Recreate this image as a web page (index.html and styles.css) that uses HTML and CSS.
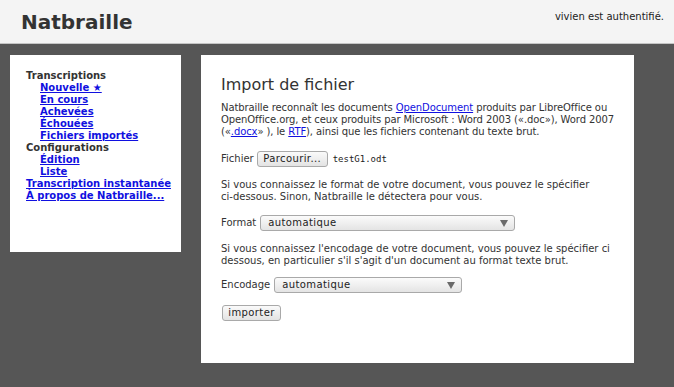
FILE: index.html
```html
<!DOCTYPE html>
<html lang="fr">
<head>
<meta charset="utf-8">
<title>Natbraille</title>
<link rel="stylesheet" href="styles.css">
</head>
<body>
<header class="topbar">
  <div class="brand">Natbraille</div>
  <div class="auth">vivien est authentifié.</div>
</header>
<div class="page">
  <nav class="sidebar">
    <div class="nav-head">Transcriptions</div>
    <ul class="nav-sub">
      <li><a href="#">Nouvelle ★</a></li>
      <li><a href="#">En cours</a></li>
      <li><a href="#">Achevées</a></li>
      <li><a href="#">Échouées</a></li>
      <li><a href="#">Fichiers importés</a></li>
    </ul>
    <div class="nav-head">Configurations</div>
    <ul class="nav-sub">
      <li><a href="#">Édition</a></li>
      <li><a href="#">Liste</a></li>
    </ul>
    <a class="nav-top" href="#">Transcription instantanée</a>
    <a class="nav-top" href="#">À propos de Natbraille...</a>
  </nav>
  <main class="content">
    <h1 class="title">Import de fichier</h1>
    <p class="text text-tight">Natbraille reconnaît les documents <a href="#">OpenDocument</a> produits par LibreOffice ou OpenOffice.org, et ceux produits par Microsoft : Word 2003 («.doc»), Word 2007 («<a href="#">.docx</a>» ), le <a href="#">RTF</a>), ainsi que les fichiers contenant du texte brut.</p>
    <div class="row row-file">
      <span class="label">Fichier</span>
      <span class="btn btn-browse">Parcourir...</span>
      <span class="filename">testG1.odt</span>
    </div>
    <p class="text">Si vous connaissez le format de votre document, vous pouvez le spécifier ci&#8209;dessous. Sinon, Natbraille le détectera pour vous.</p>
    <div class="row">
      <span class="label">Format</span>
      <span class="select select-format"><span class="select-value">automatique</span></span>
    </div>
    <p class="text text-before-enc">Si vous connaissez l'encodage de votre document, vous pouvez le spécifier ci dessous, en particulier s'il s'agit d'un document au format texte brut.</p>
    <div class="row">
      <span class="label">Encodage</span>
      <span class="select select-enc"><span class="select-value">automatique</span></span>
    </div>
    <div class="row row-last">
      <span class="btn btn-import">importer</span>
    </div>
  </main>
</div>
</body>
</html>
```

FILE: styles.css
```css
html, body {
  margin: 0;
  padding: 0;
}
body {
  background: #565656;
  font-family: "DejaVu Sans", sans-serif;
  font-size: 10px;
  line-height: 12px;
  color: #333;
  height: 387px;
}
a {
  color: #1010e0;
}
.topbar {
  box-sizing: border-box;
  height: 44px;
  background: #f4f4f4;
  border-bottom: 1px solid #c4c4c4;
  display: flex;
  justify-content: space-between;
  align-items: flex-start;
  padding: 11px 10px 0 21px;
}
.brand {
  font-size: 20px;
  line-height: 23px;
  font-weight: bold;
  color: #333;
}
.auth {
  color: #222;
  line-height: 12px;
}
.page {
  display: flex;
  align-items: flex-start;
  gap: 20px;
  padding: 11px 10px;
}
.sidebar {
  box-sizing: border-box;
  width: 171px;
  height: 197px;
  background: #fff;
  padding: 15px 10px 0 16px;
  font-weight: bold;
  display: flex;
  flex-direction: column;
  align-items: flex-start;
}
.nav-head {
  color: #333;
}
.nav-sub {
  list-style: none;
  margin: 0;
  padding: 0 0 0 14px;
}
.nav-top {
  display: block;
}
.content {
  box-sizing: border-box;
  width: 433px;
  height: 308px;
  background: #fff;
  padding: 20px 16px 0 20px;
}
.title {
  font-size: 16px;
  line-height: 19px;
  font-weight: normal;
  color: #333;
  margin: 0 0 8px 0;
}
.text {
  margin: 0 0 12px 0;
}
.text-tight {
  letter-spacing: -0.1px;
}
.text-before-enc {
  margin-bottom: 10px;
}
.row {
  display: flex;
  align-items: center;
  gap: 4px;
  height: 16px;
  margin: 0 0 12px 0;
}
.row-file {
  height: 17px;
  margin-top: 12px;
  gap: 3px;
}
.row-last {
  margin-bottom: 0;
  padding-left: 1px;
}
.btn {
  box-sizing: border-box;
  height: 16px;
  border: 1px solid #a9a9a9;
  border-radius: 3px;
  background: linear-gradient(#fafafa, #e3e3e3);
  color: #222;
  display: inline-flex;
  align-items: center;
  justify-content: center;
  letter-spacing: 0.4px;
}
.btn-browse {
  width: 71px;
}
.btn-import {
  width: 59px;
}
.filename {
  font-family: "DejaVu Sans Mono", monospace;
  font-size: 9px;
  color: #222;
  margin-left: 2px;
}
.select {
  position: relative;
  box-sizing: border-box;
  height: 16px;
  border: 1px solid #a9a9a9;
  border-radius: 3px;
  background: linear-gradient(#fbfbfb, #e4e4e4);
  display: inline-flex;
  align-items: center;
  padding-left: 7px;
  color: #222;
  letter-spacing: 0.4px;
}
.select::after {
  content: "";
  position: absolute;
  right: 6px;
  top: 4px;
  border-left: 4px solid transparent;
  border-right: 4px solid transparent;
  border-top: 7px solid #6a6a6a;
}
.select-format {
  width: 255px;
}
.select-enc {
  width: 188px;
}
```
